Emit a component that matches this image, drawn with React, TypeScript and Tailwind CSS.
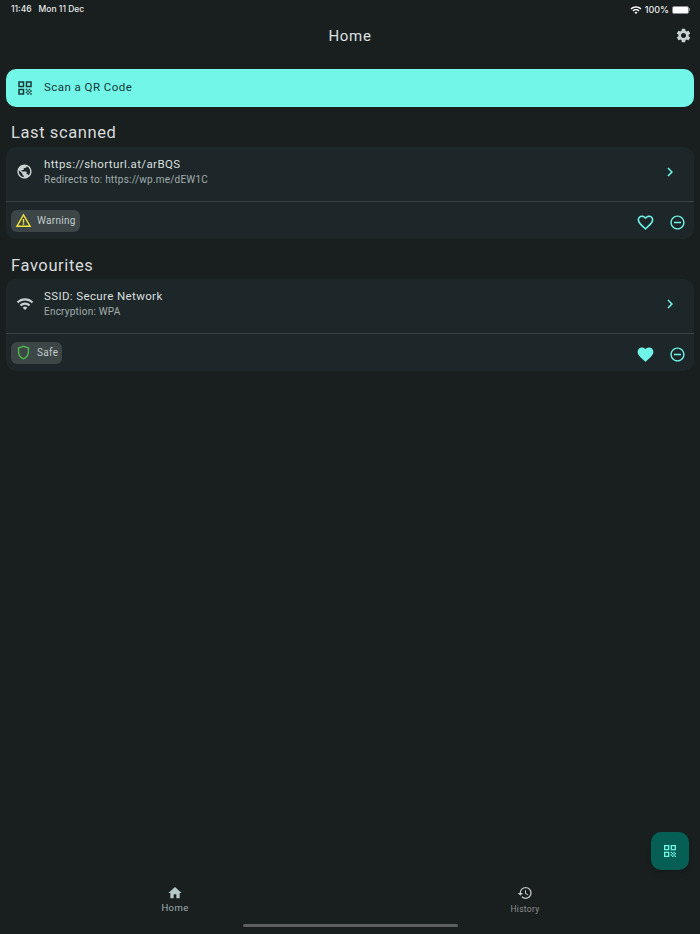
import { ReactNode } from "react";
import {
  MdChevronRight,
  MdFavorite,
  MdFavoriteBorder,
  MdHistory,
  MdHome,
  MdOutlineQrCode,
  MdOutlineShield,
  MdPublic,
  MdRemoveCircleOutline,
  MdSettings,
  MdWarningAmber,
  MdWifi,
} from "react-icons/md";

interface ScanCardProps {
  icon: ReactNode;
  title: string;
  subtitle: string;
  badgeIcon: ReactNode;
  badge: string;
  favourite?: boolean;
}

function ScanCard({ icon, title, subtitle, badgeIcon, badge, favourite }: ScanCardProps) {
  return (
    <div className="mx-1.5 rounded-[10px] bg-[#1d2729]">
      <div className="flex h-[55px] items-center border-b border-[#3a4345] pb-[5px] pl-[10px] pr-[15px]">
        <div className="flex w-[28px] justify-start text-[#c9d2d2]">{icon}</div>
        <div className="flex-1 pt-px">
          <div className="text-[11.5px] leading-[15px] tracking-[0.38px] text-[#d9dfdf]">{title}</div>
          <div className="text-[10px] leading-[15px] tracking-[0.22px] text-[#a3adad]">{subtitle}</div>
        </div>
        <MdChevronRight className="text-[#6ff5e8]" size={18} />
      </div>
      <div className="flex h-[37px] items-center justify-between pl-[5px] pr-[8px]">
        <div className="flex h-[22px] items-center gap-[5px] rounded-[6px] bg-[#3c4647] pl-[4px] pr-1 text-[10px] tracking-[0.3px] text-[#c3cbcb]">
          {badgeIcon}
          <span>{badge}</span>
        </div>
        <div className="mt-[4px] flex items-center gap-[14px] text-[#6ff5e8]">
          {favourite ? <MdFavorite size={19} /> : <MdFavoriteBorder size={19} />}
          <MdRemoveCircleOutline size={17} />
        </div>
      </div>
    </div>
  );
}

export default function App() {
  return (
    <div className="relative flex min-h-[934px] w-full flex-col bg-[#191e1f] font-['Roboto',sans-serif] text-[#e0e3e3]">
      {/* status bar */}
      <div className="flex h-[17px] items-center justify-between pl-[11px] pr-[10px] pt-0.5 font-['Inter',sans-serif] text-[8.5px] font-medium text-[#e8eaea]">
        <div className="flex gap-[7px]">
          <span>11:46</span>
          <span>Mon 11 Dec</span>
        </div>
        <div className="flex items-center gap-[3px]">
          <MdWifi size={12} className="text-white" />
          <span className="text-[9px]">100%</span>
          <div className="flex items-center">
            <div className="h-[8px] w-[17px] rounded-[2px] border border-[#8a8d8e] bg-white" />
            <div className="h-[3px] w-px bg-[#8a8d8e]" />
          </div>
        </div>
      </div>

      {/* header */}
      <div className="relative flex h-[52px] items-center justify-center pb-[14px]">
        <span className="text-[15px] tracking-[0.7px] text-[#dde1e1]">Home</span>
        <MdSettings size={17} className="absolute right-[8px] top-[10px] text-[#c9d2d2]" />
      </div>

      <div className="mx-1.5 flex h-[38px] items-center rounded-[10px] bg-[#72f6e8] pl-[10px] text-[#16393a]">
        <MdOutlineQrCode size={18} />
        <span className="ml-[10px] text-[11.5px] tracking-[0.45px]">Scan a QR Code</span>
      </div>

      <div className="flex h-[40px] items-end px-[11px] pb-px text-[16.5px] tracking-[0.6px] text-[#d8dcdc]">
        Last scanned
      </div>
      <ScanCard
        icon={<MdPublic size={17} />}
        title="https://shorturl.at/arBQS"
        subtitle="Redirects to: https://wp.me/dEW1C"
        badgeIcon={<MdWarningAmber size={17} className="text-[#f5e23c]" />}
        badge="Warning"
      />

      <div className="flex h-[40px] items-end px-[11px] text-[16.5px] tracking-[0.6px] text-[#d8dcdc]">
        Favourites
      </div>
      <ScanCard
        icon={<MdWifi size={18} />}
        title="SSID: Secure Network"
        subtitle="Encryption: WPA"
        badgeIcon={<MdOutlineShield size={17} className="text-[#4cb84c]" />}
        badge="Safe"
        favourite
      />

      <div className="flex-1" />

      {/* floating scan button */}
      <div className="absolute bottom-[64px] right-[11px] flex h-[38px] w-[38px] items-center justify-center rounded-[10px] bg-[#065f55] text-[#72f6e8] shadow-md">
        <MdOutlineQrCode size={16} />
      </div>

      {/* bottom nav */}
      <div className="grid h-[48px] grid-cols-2 pt-[12px]">
        <div className="flex flex-col items-center text-[#b6c9c9]">
          <MdHome size={16} />
          <span className="text-[9.5px] leading-[14px] tracking-[0.4px] text-[#9fafaf]">Home</span>
        </div>
        <div className="flex flex-col items-center text-[#c4c8c8]">
          <MdHistory size={16} />
          <span className="mt-px text-[8.5px] leading-[14px] tracking-[0.3px] text-[#8b9090]">History</span>
        </div>
      </div>
      <div className="flex h-[13px] justify-center pt-[3px]">
        <div className="h-[3px] w-[215px] rounded-full bg-[#5d6061]" />
      </div>
    </div>
  );
}
